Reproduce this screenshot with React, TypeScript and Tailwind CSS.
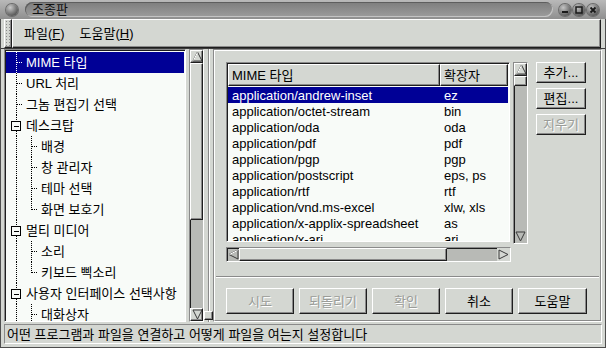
import React from "react";

const treeRows = [
  { label: "MIME 타입", level: 0, kind: "leaf", selected: true },
  { label: "URL 처리", level: 0, kind: "leaf" },
  { label: "그놈 편집기 선택", level: 0, kind: "leaf" },
  { label: "데스크탑", level: 0, kind: "open" },
  { label: "배경", level: 1, kind: "leaf" },
  { label: "창 관리자", level: 1, kind: "leaf" },
  { label: "테마 선택", level: 1, kind: "leaf" },
  { label: "화면 보호기", level: 1, kind: "leaf", last: true },
  { label: "멀티 미디어", level: 0, kind: "open" },
  { label: "소리", level: 1, kind: "leaf" },
  { label: "키보드 삑소리", level: 1, kind: "leaf", last: true },
  { label: "사용자 인터페이스 선택사항", level: 0, kind: "open" },
  { label: "대화상자", level: 1, kind: "leaf" },
];

const mimeRows = [
  ["application/andrew-inset", "ez"],
  ["application/octet-stream", "bin"],
  ["application/oda", "oda"],
  ["application/pdf", "pdf"],
  ["application/pgp", "pgp"],
  ["application/postscript", "eps, ps"],
  ["application/rtf", "rtf"],
  ["application/vnd.ms-excel", "xlw, xls"],
  ["application/x-applix-spreadsheet", "as"],
  ["application/x-ari", "ari"],
];

const raised =
  "border border-t-white border-l-white border-r-[#1e1e1e] border-b-[#1e1e1e] shadow-[inset_-1px_-1px_0_#8a8a8a]";
const sunken =
  "border border-t-[#8a8a8a] border-l-[#8a8a8a] border-r-white border-b-white shadow-[inset_1px_1px_0_#1e1e1e]";
const disabledText = "text-[#9a9c98] [text-shadow:1px_1px_0_#ffffff]";

function TreeGutter({ level, kind, last, selected }: { level: number; kind: string; last?: boolean; selected?: boolean }) {
  const c = selected ? "#ffffff" : "#000000";
  const w = level === 0 ? 20 : 35;
  return (
    <svg width={w} height={21} className="shrink-0" shapeRendering="crispEdges">
      <line x1={10.5} y1={0} x2={10.5} y2={21} stroke={c} strokeDasharray="1 1" />
      {level === 0 && kind === "leaf" && (
        <line x1={11} y1={10.5} x2={17} y2={10.5} stroke={c} strokeDasharray="1 1" />
      )}
      {kind === "open" && (
        <g>
          <rect x={5.5} y={6.5} width={9} height={9} fill="#f8fbf8" stroke="#000" />
          <line x1={7.5} y1={11} x2={12.5} y2={11} stroke="#000" />
        </g>
      )}
      {level === 1 && (
        <g>
          <line x1={25.5} y1={0} x2={25.5} y2={last ? 11 : 21} stroke={c} strokeDasharray="1 1" />
          <line x1={26} y1={10.5} x2={32} y2={10.5} stroke={c} strokeDasharray="1 1" />
        </g>
      )}
    </svg>
  );
}

function Arrow({ dir, className }: { dir: "up" | "down" | "left" | "right"; className?: string }) {
  const pts = {
    up: "2,11 6.5,2 11,11",
    down: "2,2 6.5,11 11,2",
    left: "11,2 2,6.5 11,11",
    right: "2,2 11,6.5 2,11",
  }[dir];
  return (
    <div className={`flex shrink-0 items-center justify-center ${className ?? ""}`}>
      <svg width={13} height={13}>
        <polygon points={pts} fill="none" stroke="#3a3a3a" strokeWidth={1} />
        {dir === "up" && <line x1={2.5} y1={10.5} x2={6.5} y2={2.5} stroke="#fff" />}
        {dir === "left" && <line x1={2.5} y1={6.5} x2={10.5} y2={2.5} stroke="#fff" />}
      </svg>
    </div>
  );
}

function Button({ label, disabled, className }: { label: string; disabled?: boolean; className: string }) {
  return (
    <div
      className={`flex items-center justify-center ${raised} ${className} ${disabled ? disabledText : "text-black"}`}
    >
      {label}
    </div>
  );
}

export default function App() {
  return (
    <div className="flex h-[348px] w-[606px] flex-col overflow-hidden bg-[#d4d7d2] font-['Liberation_Sans','Noto_Sans_CJK_KR',sans-serif] text-[13px] leading-none text-black">
      {/* title bar */}
      <div className="flex h-[19px] shrink-0 items-center bg-gradient-to-b from-[#b9b9b9] via-[#a4a4a4] to-[#8f8f8f] pl-[6px] pr-[7px]">
        <div className="h-[12px] w-[12px] rounded-full bg-[radial-gradient(circle_at_35%_30%,#c9c9c9,#5d5d5d_70%)] shadow-[0_0_0_1px_#6b6b6b]" />
        <div className="ml-[7px] flex h-[15px] flex-1 items-center rounded-full bg-gradient-to-b from-[#7d7d7d] to-[#9c9c9c] pl-[7px] shadow-[inset_1px_1px_0_#5e5e5e,inset_-1px_-1px_0_#c4c4c4]">
          <span className="text-[13px] text-[#111]">조종판</span>
        </div>
        <div className="ml-[6px] flex gap-[2px]">
          {["min", "max", "close"].map((k) => (
            <div
              key={k}
              className="flex h-[12px] w-[12px] items-center justify-center rounded-full bg-[radial-gradient(circle_at_35%_30%,#c4c4c4,#5a5a5a_75%)] shadow-[0_0_0_1px_#6b6b6b]"
            >
              <svg width={8} height={8}>
                {k === "min" && <rect x={1} y={5} width={6} height={2} fill="#1a1a1a" />}
                {k === "max" && <rect x={1} y={1} width={6} height={6} fill="none" stroke="#1a1a1a" strokeWidth={1.5} />}
                {k === "close" && (
                  <path d="M1.5 1.5 L6.5 6.5 M6.5 1.5 L1.5 6.5" stroke="#1a1a1a" strokeWidth={1.8} />
                )}
              </svg>
            </div>
          ))}
        </div>
      </div>

      {/* window body */}
      <div className="flex flex-1 flex-col border-x border-b border-[#4e4e4e]">
        {/* menu bar */}
        <div className="flex h-[30px] shrink-0 border-b border-[#3c3c3c] pr-[4px]">
          <div className={`ml-[3px] w-[8px] ${raised} bg-[radial-gradient(circle,#8a8a8a_0.6px,transparent_0.8px)] bg-[length:3px_3px]`} />
          <div className={`flex flex-1 items-center gap-[15px] pl-[11px] ${raised}`}>
            <span>
              파일(<span className="underline">F</span>)
            </span>
            <span>
              도움말(<span className="underline">H</span>)
            </span>
          </div>
        </div>

        {/* main area */}
        <div className="flex h-[273px] shrink-0 pl-[3px] pr-[3px]">
          {/* tree */}
          <div className={`w-[182px] overflow-hidden bg-[#f8fbf8] p-[1px] pt-[2px] ${sunken}`}>
            {treeRows.map((r) => (
              <div
                key={r.label}
                className={`flex h-[21px] items-center ${r.selected ? "bg-[#000096] text-white" : ""}`}
              >
                <TreeGutter level={r.level} kind={r.kind} last={r.last} selected={r.selected} />
                <span className="whitespace-nowrap">{r.label}</span>
              </div>
            ))}
          </div>

          {/* tree scrollbar */}
          <div className={`ml-[3px] flex w-[15px] flex-col bg-[#b8bab6] ${sunken}`}>
            <Arrow dir="up" className={`h-[13px] bg-[#d4d7d2] ${raised}`} />
            <div className={`h-[157px] bg-[#d4d7d2] ${raised}`} />
            <div className="flex-1" />
            <Arrow dir="down" className={`h-[13px] bg-[#d4d7d2] ${raised}`} />
          </div>

          {/* pane gutter */}
          <div className="relative flex w-[9px] justify-center">
            <div className="w-[2px] border-l border-[#8a8a8a] bg-white" />
            <div className={`absolute left-0 top-[262px] h-[9px] w-[9px] bg-[#d4d7d2] ${raised}`} />
          </div>

          {/* right frame */}
          <div className="flex flex-1 border border-t-[#8a8a8a] border-l-[#8a8a8a] border-r-white border-b-white">
            <div className="flex flex-1 flex-col border border-t-white border-l-white border-r-[#8a8a8a] border-b-[#8a8a8a] pt-[11px]">
              <div className="flex pl-[11px]">
                <div className="flex w-[302px] flex-col">
                  <div className="flex">
                    {/* clist */}
                    <div className={`flex h-[180px] w-[284px] flex-col overflow-hidden bg-[#f8fbf8] p-[1px] ${sunken}`}>
                      <div className="flex h-[22px] shrink-0">
                        <div className={`flex w-[212px] items-center bg-[#d4d7d2] pl-[3px] ${raised}`}>MIME 타입</div>
                        <div className={`flex flex-1 items-center bg-[#d4d7d2] pl-[3px] ${raised}`}>확장자</div>
                      </div>
                      <div className="pt-[1px]">
                        {mimeRows.map(([m, e], i) => (
                          <div
                            key={m}
                            className={`flex h-[16px] items-center ${i === 0 ? "bg-[#000096] text-white" : ""}`}
                          >
                            <span className="w-[212px] whitespace-nowrap pl-[4px]">{m}</span>
                            <span className="pl-[4px]">{e}</span>
                          </div>
                        ))}
                      </div>
                    </div>
                    {/* vertical scrollbar */}
                    <div className={`ml-[3px] flex h-[182px] w-[15px] flex-col bg-[#b8bab6] ${sunken}`}>
                      <Arrow dir="up" className={`h-[13px] bg-[#d4d7d2] ${raised}`} />
                      <div className={`h-[10px] bg-[#d4d7d2] ${raised}`} />
                      <div className="flex-1" />
                      <Arrow dir="down" className="h-[13px]" />
                    </div>
                  </div>
                  {/* horizontal scrollbar */}
                  <div className={`mt-[3px] flex h-[15px] w-[285px] bg-[#b8bab6] ${sunken}`}>
                    <Arrow dir="left" className="w-[12px]" />
                    <div className={`w-[208px] bg-[#d4d7d2] ${raised}`} />
                    <div className="flex-1" />
                    <Arrow dir="right" className="w-[13px] bg-[#d4d7d2]" />
                  </div>
                </div>
                <div className="ml-[8px] flex w-[50px] flex-col gap-[5px]">
                  <Button label="추가..." className="h-[21px]" />
                  <Button label="편집..." className="h-[21px]" />
                  <Button label="지우기" disabled className="h-[21px]" />
                </div>
              </div>

              {/* separator */}
              <div className="mx-[1px] mt-[14px] h-[2px] border-t border-[#8a8a8a] border-b-white border-b" />

              {/* bottom buttons */}
              <div className="mt-[10px] flex gap-[5px] pl-[11px]">
                <Button label="시도" disabled className="h-[26px] w-[68px]" />
                <Button label="되돌리기" disabled className="h-[26px] w-[68px]" />
                <Button label="확인" disabled className="h-[26px] w-[68px]" />
                <Button label="취소" className="h-[26px] w-[68px]" />
                <Button label="도움말" className="h-[26px] w-[69px]" />
              </div>
            </div>
          </div>
        </div>

        {/* status bar */}
        <div className="mt-[2px] flex px-[3px]">
          <div className="flex h-[20px] flex-1 items-center border border-t-[#8a8a8a] border-l-[#8a8a8a] border-r-white border-b-white pl-[2px]">
            어떤 프로그램과 파일을 연결하고 어떻게 파일을 여는지 설정합니다
          </div>
        </div>
      </div>
    </div>
  );
}
